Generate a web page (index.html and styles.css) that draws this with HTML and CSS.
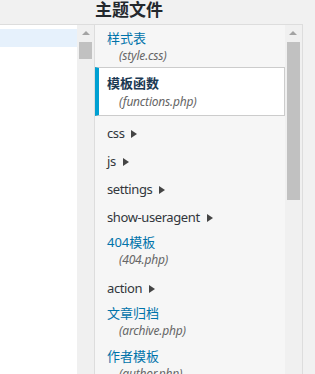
FILE: index.html
```html
<!DOCTYPE html>
<html lang="zh-CN">
<head>
    <meta charset="UTF-8">
    <meta name="viewport" content="width=device-width, initial-scale=1.0">
    <title>编辑主题</title>
    <link rel="stylesheet" href="styles.css">
</head>
<body>
    <div class="screen">
        <div class="editor">
            <div class="code">
                <div class="line-hl"></div>
            </div>
            <div class="vscroll">
                <span class="up"></span>
                <span class="thumb thumb-short"></span>
            </div>
        </div>

        <div class="side">
            <h2>主题文件</h2>
            <div class="files">
                <ul class="tree">
                    <li class="file">
                        <a href="#">样式表</a>
                        <span class="fname">(style.css)</span>
                    </li>
                    <li class="file current">
                        <a href="#">模板函数</a>
                        <span class="fname">(functions.php)</span>
                    </li>
                    <li class="dir">css <span class="caret"></span></li>
                    <li class="dir">js <span class="caret"></span></li>
                    <li class="dir">settings <span class="caret"></span></li>
                    <li class="dir">show-useragent <span class="caret"></span></li>
                    <li class="file">
                        <a href="#">404模板</a>
                        <span class="fname">(404.php)</span>
                    </li>
                    <li class="dir">action <span class="caret"></span></li>
                    <li class="file">
                        <a href="#">文章归档</a>
                        <span class="fname">(archive.php)</span>
                    </li>
                    <li class="file">
                        <a href="#">作者模板</a>
                        <span class="fname">(author.php)</span>
                    </li>
                </ul>
                <div class="vscroll">
                    <span class="up"></span>
                    <span class="thumb thumb-long"></span>
                </div>
            </div>
        </div>
    </div>
</body>
</html>
```

FILE: styles.css
```css
body {
    margin: 0;
    background: #f1f1f1;
    font-family: "Noto Sans", "Noto Sans CJK SC", sans-serif;
    color: #32373c;
    overflow: hidden;
}

.screen {
    display: flex;
    align-items: flex-start;
}

/* code editor on the left, scrolled off to the side */
.editor {
    width: 94px;
    height: 360px;
    margin-top: 24px;
    border-top: 1px solid #ddd;
    display: flex;
    background: #fff;
}

.code {
    flex: 1;
    padding-top: 4px;
}

.line-hl {
    height: 18px;
    background: #e6f1fc;
}

.vscroll {
    width: 17px;
    background: #f0f0f0;
    display: flex;
    flex-direction: column;
    align-items: center;
}

.vscroll .up {
    width: 0;
    height: 0;
    margin-top: 6px;
    border-left: 4px solid transparent;
    border-right: 4px solid transparent;
    border-bottom: 4px solid #a3a3a3;
}

.vscroll .thumb {
    width: 13px;
    margin-top: 7px;
    background: #c1c1c1;
}

.thumb-short {
    height: 17px;
}

.thumb-long {
    height: 158px;
}

/* theme files sidebar */
.side {
    width: 209px;
}

.side h2 {
    margin: 0;
    height: 24px;
    padding-left: 1px;
    font-size: 17px;
    line-height: 19px;
    font-weight: 700;
    color: #23282d;
}

.files {
    height: 360px;
    border: 1px solid #ddd;
    display: flex;
    background: #f6f6f6;
}

.files .vscroll {
    width: 16px;
    padding-right: 1px;
}

.tree {
    flex: 1;
    list-style: none;
    margin: 0;
    padding: 2px 0 0;
    font-size: 13px;
}

.tree li {
    display: block;
}

.file {
    padding: 1px 12px 6px;
}

.file a {
    display: block;
    line-height: 20px;
    color: #0073aa;
    text-decoration: none;
}

.fname {
    display: block;
    padding-left: 12px;
    line-height: 16px;
    font-size: 12px;
    font-style: italic;
    letter-spacing: -0.2px;
    color: #666;
}

.current {
    margin: -3px 0 3px;
    padding: 5px 12px 5px 8px;
    background: #fff;
    border: 1px solid #ccc;
    border-left: 4px solid #00a0d2;
}

.current a {
    font-weight: 700;
    color: #1b3953;
}

.current .fname {
    line-height: 17px;
}

.dir {
    padding: 4px 12px;
    line-height: 20px;
    letter-spacing: -0.4px;
    color: #32373c;
}

.caret {
    display: inline-block;
    margin-left: 4px;
    width: 0;
    height: 0;
    border-top: 4px solid transparent;
    border-bottom: 4px solid transparent;
    border-left: 6px solid #444;
}
```
